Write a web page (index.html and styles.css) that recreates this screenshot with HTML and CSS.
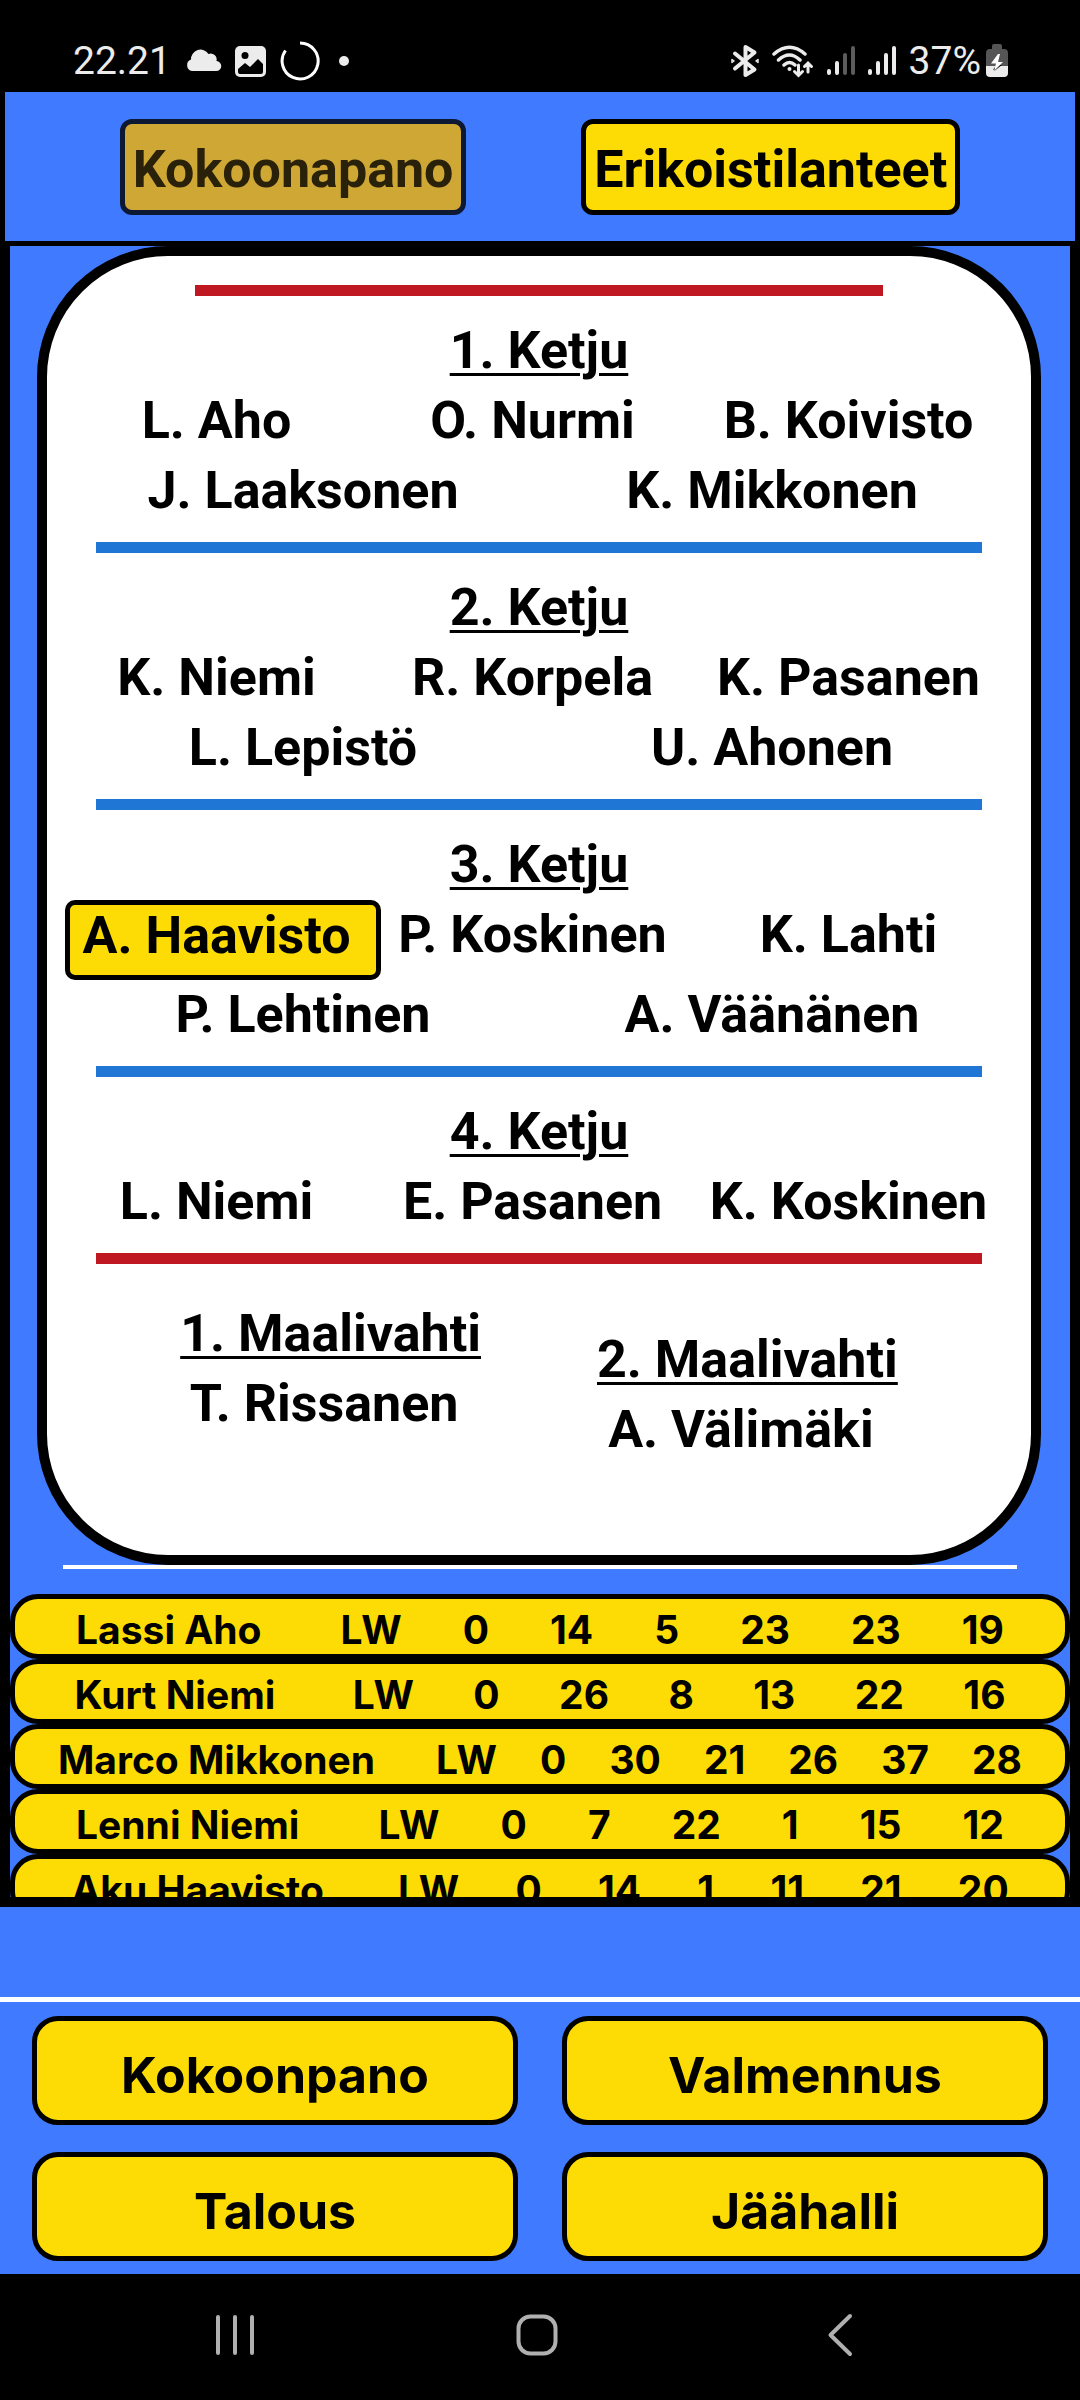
FILE: index.html
```html
<!DOCTYPE html>
<html lang="fi">
<head>
<meta charset="utf-8">
<meta name="viewport" content="width=device-width, initial-scale=1">
<title>Kokoonpano</title>
<link rel="stylesheet" href="styles.css">
</head>
<body>
<div class="status-bar">
  <div class="status-group">
    <span class="status-clock">22.21</span>
    <svg class="status-icon" width="36" height="40" viewBox="0 0 36 40" fill="#ececec" aria-hidden="true"><path d="M6 30a6 6 0 0 1-1-11.500a9.500 9.500 0 0 1 17.500-5.500a6 6 0 0 1 8 7a5 5 0 0 1-.5 10z"/></svg>
    <svg class="status-icon" width="32" height="40" viewBox="0 0 32 40" aria-hidden="true"><rect x="0" y="5" width="31" height="31" rx="5" fill="#ececec"/><circle cx="10" cy="14.500" r="3.500"/><path d="M3 28l7-6 5 4 8-8 5 5v8q0 2-2 2H5q-2 0-2-2z"/></svg>
    <svg class="status-icon" width="40" height="40" viewBox="0 0 40 40" fill="none" stroke="#fff" stroke-width="3" aria-hidden="true"><path d="M20 2a18 18 0 1 1-14.500 7.500"/></svg>
    <svg class="status-icon status-dot" width="10" height="40" viewBox="0 0 10 40" fill="#ececec" aria-hidden="true"><circle cx="5" cy="20" r="5"/></svg>
  </div>
  <div class="status-group">
    <svg class="status-icon" width="28" height="40" viewBox="0 0 28 40" fill="none" stroke="#ececec" stroke-width="4" stroke-linecap="round" stroke-linejoin="round" aria-hidden="true"><path d="M4 12.500L23.500 28.500L14.500 34V6L23.500 11.500L4 27.500"/><path d="M1 18.500v3l2-1.500zM27 18.500v3l-2-1.500z" stroke-width="1.500"/></svg>
    <svg class="status-icon" width="42" height="40" viewBox="0 0 42 40" fill="none" stroke="#ececec" stroke-width="3.500" stroke-linecap="round" aria-hidden="true"><path d="M2 13Q17.500-.5 33 13M6.500 19Q17.500 9 28 19M12 24Q17.500 19 23 24"/><circle cx="17.500" cy="28" r="2" fill="#ececec" stroke="none"/><path d="M26.500 24v9.500M22.500 30.500l4 4 4-4M36 31V22.500M32.500 25.500l3.500-3.500 3.500 3.500" stroke-width="3"/></svg>
    <svg class="status-icon" width="28" height="40" viewBox="0 0 28 40" stroke="#ececec" stroke-width="4" stroke-linecap="round" aria-hidden="true"><path d="M2 30v2M10 22v10"/><path d="M18 14v18M26 7v25" stroke="#5c5c5c"/></svg>
    <svg class="status-icon" width="28" height="40" viewBox="0 0 28 40" stroke="#ececec" stroke-width="4" stroke-linecap="round" aria-hidden="true"><path d="M2 30v2M10 22v10M18 14v18M26 7v25"/></svg>
    <span>37%</span>
    <svg class="status-icon status-cell" width="22" height="40" viewBox="0 0 22 40" aria-hidden="true"><path d="M6 5q0-2 2-2h6q2 0 2 2v3h2q4 0 4 4v14H0V12q0-4 4-4h2z" fill="#555"/><path d="M0 25h22v7q0 4-4 4H4q-4 0-4-4z" fill="#ececec"/><path d="M11 25L8 29l5-4z" fill="#000" stroke="#000" stroke-width="2"/><path d="M12 13L5 22.500h5L8 30l9-9h-5l2-8z" fill="#fff"/></svg>
  </div>
</div>

<div class="app">
  <header class="tabs">
    <button class="tab tab-current" type="button" disabled>Kokoonapano</button>
    <button class="tab" type="button">Erikoistilanteet</button>
  </header>

  <main class="panel">
    <div class="rink">
      <hr class="line line-red line-short">
      <section class="unit">
        <h2 class="unit-title">1. Ketju</h2>
        <div class="forwards">
          <button class="player" type="button">L. Aho</button>
          <button class="player" type="button">O. Nurmi</button>
          <button class="player" type="button">B. Koivisto</button>
        </div>
        <div class="defenders">
          <button class="player" type="button">J. Laaksonen</button>
          <button class="player" type="button">K. Mikkonen</button>
        </div>
      </section>
      <hr class="line line-blue">
      <section class="unit">
        <h2 class="unit-title">2. Ketju</h2>
        <div class="forwards">
          <button class="player" type="button">K. Niemi</button>
          <button class="player" type="button">R. Korpela</button>
          <button class="player" type="button">K. Pasanen</button>
        </div>
        <div class="defenders">
          <button class="player" type="button">L. Lepistö</button>
          <button class="player" type="button">U. Ahonen</button>
        </div>
      </section>
      <hr class="line line-blue">
      <section class="unit">
        <h2 class="unit-title">3. Ketju</h2>
        <div class="forwards">
          <button class="player player-selected" type="button" aria-pressed="true">A. Haavisto</button>
          <button class="player" type="button">P. Koskinen</button>
          <button class="player" type="button">K. Lahti</button>
        </div>
        <div class="defenders">
          <button class="player" type="button">P. Lehtinen</button>
          <button class="player" type="button">A. Väänänen</button>
        </div>
      </section>
      <hr class="line line-blue">
      <section class="unit">
        <h2 class="unit-title">4. Ketju</h2>
        <div class="forwards">
          <button class="player" type="button">L. Niemi</button>
          <button class="player" type="button">E. Pasanen</button>
          <button class="player" type="button">K. Koskinen</button>
        </div>
      </section>
      <hr class="line line-red">
      <div class="goalies">
        <section class="goalie">
          <h2 class="unit-title">1. Maalivahti</h2>
          <button class="player" type="button">T. Rissanen</button>
        </section>
        <section class="goalie goalie-backup">
          <h2 class="unit-title">2. Maalivahti</h2>
          <button class="player" type="button">A. Välimäki</button>
        </section>
      </div>
    </div>

    <hr class="roster-rule">

    <table class="roster">
      <tbody>
        <tr><th scope="row">Lassi Aho</th><td>LW</td><td>0</td><td>14</td><td>5</td><td>23</td><td>23</td><td>19</td></tr>
        <tr><th scope="row">Kurt Niemi</th><td>LW</td><td>0</td><td>26</td><td>8</td><td>13</td><td>22</td><td>16</td></tr>
        <tr><th scope="row">Marco Mikkonen</th><td>LW</td><td>0</td><td>30</td><td>21</td><td>26</td><td>37</td><td>28</td></tr>
        <tr><th scope="row">Lenni Niemi</th><td>LW</td><td>0</td><td>7</td><td>22</td><td>1</td><td>15</td><td>12</td></tr>
        <tr><th scope="row">Aku Haavisto</th><td>LW</td><td>0</td><td>14</td><td>1</td><td>11</td><td>21</td><td>20</td></tr>
      </tbody>
    </table>
  </main>
</div>

<nav class="menu">
  <button class="menu-button" type="button">Kokoonpano</button>
  <button class="menu-button" type="button">Valmennus</button>
  <button class="menu-button" type="button">Talous</button>
  <button class="menu-button" type="button">Jäähalli</button>
</nav>

<div class="system-nav">
  <button class="system-button" type="button" aria-label="Viimeisimmät"><svg width="44" height="44" viewBox="0 0 44 44" stroke="#b0b0b0" stroke-width="4" stroke-linecap="round"><path d="M5 4v36M22 4v36M39 4v36"/></svg></button>
  <button class="system-button" type="button" aria-label="Koti"><svg width="44" height="44" viewBox="0 0 44 44" fill="none" stroke="#b0b0b0" stroke-width="4"><rect x="3.500" y="3.500" width="37" height="37" rx="12"/></svg></button>
  <button class="system-button" type="button" aria-label="Takaisin"><svg width="44" height="44" viewBox="0 0 44 44" fill="none" stroke="#b0b0b0" stroke-width="4" stroke-linecap="round" stroke-linejoin="round"><path d="M33 3L13.500 22L33 41"/></svg></button>
</div>
</body>
</html>
```
FILE: styles.css
```css
:root {
  --blue: #407bff;
  --yellow: #fcdc04;
  --line: 5px;
  --body-font: Roboto, "Liberation Sans", sans-serif;
  --display-font: Inter, "Noto Sans", sans-serif;
}

* {
  box-sizing: border-box;
}

body {
  display: flex;
  flex-direction: column;
  height: 100vh;
  margin: 0;
  background: var(--blue);
  color: #000;
  font-family: var(--body-font);
}

button {
  margin: 0;
  border: 0;
  color: inherit;
  font: inherit;
}

/* Phone status bar */
.status-bar {
  display: flex;
  flex: none;
  align-items: center;
  justify-content: space-between;
  padding: 35px 72px 0 73px;
  height: 87px;
  background: #000;
  color: #ececec;
  font-size: 39px;
  line-height: 52px;
}

.status-group {
  display: flex;
  align-items: center;
  gap: 13px;
}

.status-clock {
  margin-right: 2px;
}

.status-icon {
  display: block;
  flex: none;
}

.status-dot {
  margin-left: 6px;
}

.status-cell {
  margin-left: -8px;
}

/* App frame */
.app {
  display: flex;
  flex: 1;
  flex-direction: column;
  min-height: 0;
  border: var(--line) solid #000;
}

.tabs {
  display: flex;
  flex: none;
  justify-content: space-evenly;
  padding: 27px 0 26px;
}

.tab {
  height: 96px;
  padding: 4px 8px 0;
  border: var(--line) solid #000;
  border-radius: 12px;
  background: var(--yellow);
  font-size: 52px;
  font-weight: 700;
}

.tab-current {
  border-color: #0d1933;
  background: #cfa734;
  color: #2a210a;
}

.panel {
  flex: 1;
  min-height: 0;
  overflow-y: auto;
  scrollbar-width: none;
  border: var(--line) solid #000;
}

/* Line-up card */
.rink {
  margin: 0 29px 0 27px;
  padding: 29px 0 90px;
  border: 10px solid #000;
  border-radius: 131px;
  background: #fff;
  font-size: 52px;
  font-weight: 700;
  line-height: 70px;
}

.line {
  width: 90%;
  height: 11px;
  margin: 0 auto;
  border: 0;
}

.line-short {
  width: 70%;
}

.line-red {
  background: #c01823;
}

.line-blue {
  background: #2076d4;
}

.unit {
  padding: 20px 0 16px;
}

.unit-title {
  margin: 0;
  font-size: 52px;
  text-align: center;
  text-decoration: underline;
  text-decoration-thickness: 3px;
  text-underline-offset: 5px;
}

.forwards,
.defenders {
  display: grid;
  grid-template-columns: repeat(3, 1fr);
  padding: 0 18px;
}

.defenders {
  grid-template-columns: repeat(2, 1fr);
  padding-left: 28px;
}

.player {
  align-self: start;
  padding: 0 13px 0 0;
  background: none;
  white-space: nowrap;
}

.player-selected {
  padding: 0 13px 8px 0;
  border: var(--line) solid #000;
  border-radius: 10px;
  background: var(--yellow);
  line-height: 62px;
}

.goalies {
  display: flex;
  align-items: flex-start;
  justify-content: center;
  gap: 116px;
  padding-top: 35px;
}

.goalie {
  display: grid;
}

.goalie-backup {
  padding-top: 26px;
}

/* Player list */
.roster-rule {
  height: 4px;
  margin: 0 53px 25px;
  border: 0;
  background: #fff;
}

.roster,
.roster tbody {
  display: block;
}

.roster {
  font-family: var(--display-font);
  font-size: 39px;
  font-weight: 700;
  line-height: 49px;
}

.roster tr {
  display: flex;
  justify-content: space-evenly;
  padding: 6px 0 0;
  height: 65px;
  border: var(--line) solid #000;
  border-radius: 28px;
  background: var(--yellow);
}

.roster th,
.roster td {
  padding: 0;
}

.roster th {
  padding-right: 18px;
}

/* Main menu */
.menu {
  display: grid;
  flex: none;
  grid-template-columns: repeat(2, 1fr);
  gap: 27px 44px;
  margin-top: 90px;
  padding: 14px 32px 13px;
  border-top: var(--line) solid #fff;
}

.menu-button {
  height: 109px;
  padding: 8px 0 0;
  border: var(--line) solid #000;
  border-radius: 26px;
  background: var(--yellow);
  font-family: var(--display-font);
  font-size: 50px;
  font-weight: 700;
}

/* Phone navigation bar */
.system-nav {
  display: grid;
  flex: none;
  grid-template-columns: repeat(3, 1fr);
  height: 126px;
  padding: 0 90px 4px 84px;
  background: #000;
}

.system-button {
  display: grid;
  place-items: center;
  padding: 0;
  background: none;
}
```
